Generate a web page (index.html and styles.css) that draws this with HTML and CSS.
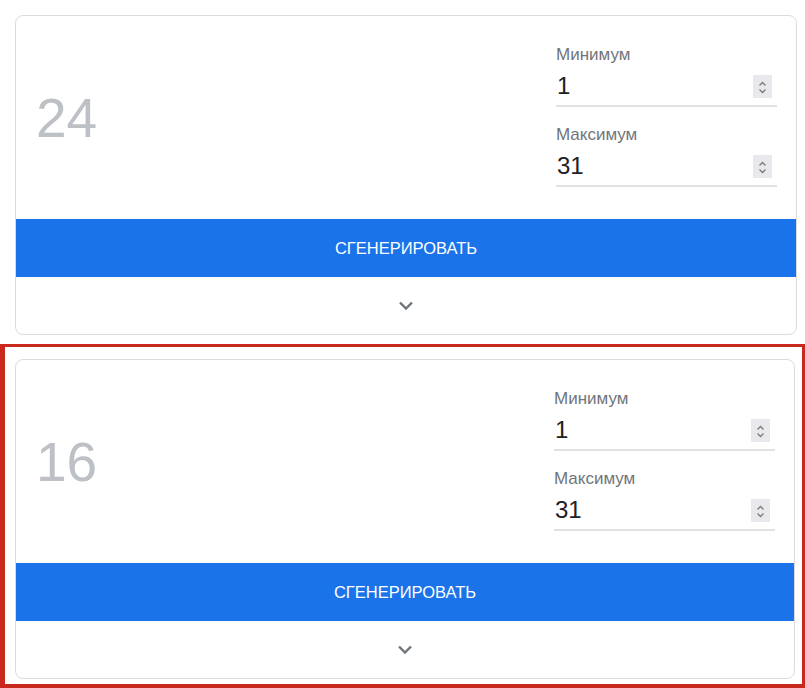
FILE: index.html
```html
<!DOCTYPE html>
<html lang="ru">

<head>
    <meta charset="UTF-8">
    <meta name="viewport" content="width=device-width, initial-scale=1.0">
    <title>Генератор случайных чисел</title>
    <link rel="stylesheet" href="styles.css">
</head>

<body>
    <div class="rng-card first-card">
        <div class="rng-top">
            <div class="rng-result">24</div>
            <div class="rng-fields">
                <label class="field">
                    <span class="field-label">Минимум</span>
                    <span class="field-box">
                        <input type="number" value="1">
                        <svg class="spinner" width="19" height="23" viewBox="0 0 19 23">
                            <rect width="19" height="23" fill="#e9e9ed"/>
                            <path d="M6.5 10.5 L9.5 7.5 L12.5 10.5" fill="none" stroke="#7a7a7a" stroke-width="1.3"/>
                            <path d="M6.5 14.5 L9.5 17.5 L12.5 14.5" fill="none" stroke="#7a7a7a" stroke-width="1.3"/>
                        </svg>
                    </span>
                </label>
                <label class="field">
                    <span class="field-label">Максимум</span>
                    <span class="field-box">
                        <input type="number" value="31">
                        <svg class="spinner" width="19" height="23" viewBox="0 0 19 23">
                            <rect width="19" height="23" fill="#e9e9ed"/>
                            <path d="M6.5 10.5 L9.5 7.5 L12.5 10.5" fill="none" stroke="#7a7a7a" stroke-width="1.3"/>
                            <path d="M6.5 14.5 L9.5 17.5 L12.5 14.5" fill="none" stroke="#7a7a7a" stroke-width="1.3"/>
                        </svg>
                    </span>
                </label>
            </div>
        </div>
        <button class="generate">Сгенерировать</button>
        <div class="rng-more">
            <svg width="16" height="10" viewBox="0 0 16 10">
                <path d="M2 1.5 L8 7.5 L14 1.5" fill="none" stroke="#70757a" stroke-width="2.4"/>
            </svg>
        </div>
    </div>

    <div class="highlight">
        <div class="rng-card">
            <div class="rng-top">
                <div class="rng-result">16</div>
                <div class="rng-fields">
                    <label class="field">
                        <span class="field-label">Минимум</span>
                        <span class="field-box">
                            <input type="number" value="1">
                            <svg class="spinner" width="19" height="23" viewBox="0 0 19 23">
                                <rect width="19" height="23" fill="#e9e9ed"/>
                                <path d="M6.5 10.5 L9.5 7.5 L12.5 10.5" fill="none" stroke="#7a7a7a" stroke-width="1.3"/>
                                <path d="M6.5 14.5 L9.5 17.5 L12.5 14.5" fill="none" stroke="#7a7a7a" stroke-width="1.3"/>
                            </svg>
                        </span>
                    </label>
                    <label class="field">
                        <span class="field-label">Максимум</span>
                        <span class="field-box">
                            <input type="number" value="31">
                            <svg class="spinner" width="19" height="23" viewBox="0 0 19 23">
                                <rect width="19" height="23" fill="#e9e9ed"/>
                                <path d="M6.5 10.5 L9.5 7.5 L12.5 10.5" fill="none" stroke="#7a7a7a" stroke-width="1.3"/>
                                <path d="M6.5 14.5 L9.5 17.5 L12.5 14.5" fill="none" stroke="#7a7a7a" stroke-width="1.3"/>
                            </svg>
                        </span>
                    </label>
                </div>
            </div>
            <button class="generate">Сгенерировать</button>
            <div class="rng-more">
                <svg width="16" height="10" viewBox="0 0 16 10">
                    <path d="M2 1.5 L8 7.5 L14 1.5" fill="none" stroke="#70757a" stroke-width="2.4"/>
                </svg>
            </div>
        </div>
    </div>
</body>

</html>
```

FILE: styles.css
```css
body {
    font-family: "Liberation Sans", Arial, sans-serif;
    margin: 0;
    padding: 0;
    background-color: #fff;
    height: 688px;
    overflow: hidden;
}

.rng-card {
    display: flex;
    flex-direction: column;
    height: 320px;
    box-sizing: border-box;
    border: 1px solid #dadce0;
    border-radius: 8px;
    background-color: #fff;
    overflow: hidden;
}

.first-card {
    margin: 15px 8px 0 15px;
}

.highlight {
    margin-top: 9px;
    padding: 12px 7px 5px 10px;
    border-style: solid;
    border-color: #c8281e;
    border-width: 3px 3px 4px 5px;
}

.rng-top {
    display: flex;
    justify-content: space-between;
    align-items: center;
    padding: 27px 19px 32px 20px;
}

.rng-result {
    font-size: 55px;
    line-height: 1;
    padding-top: 7px;
    color: #bdc1c6;
}

.rng-fields {
    display: flex;
    flex-direction: column;
    gap: 16px;
    width: 221px;
}

.field {
    display: flex;
    flex-direction: column;
}

.field-label {
    font-size: 17px;
    line-height: 23px;
    color: #70757a;
}

.field-box {
    display: flex;
    align-items: center;
    padding: 6px 5px 5px 1px;
    border-bottom: 2px solid #dfe1e5;
}

.field-box input {
    flex: 1;
    min-width: 0;
    padding: 0;
    border: none;
    outline: none;
    background: transparent;
    font-family: "Liberation Sans", Arial, sans-serif;
    font-size: 24px;
    line-height: 28px;
    height: 28px;
    color: #202124;
    -moz-appearance: textfield;
}

.field-box input::-webkit-inner-spin-button,
.field-box input::-webkit-outer-spin-button {
    -webkit-appearance: none;
    margin: 0;
}

.spinner {
    flex: none;
    display: block;
}

.generate {
    height: 58px;
    flex: none;
    border: none;
    background-color: #1a73e8;
    color: #fff;
    font-family: "Liberation Sans", Arial, sans-serif;
    font-size: 16.5px;
    text-transform: uppercase;
    cursor: pointer;
}

.rng-more {
    flex: 1;
    display: flex;
    justify-content: center;
    align-items: center;
}

.rng-more svg {
    display: block;
}
```
